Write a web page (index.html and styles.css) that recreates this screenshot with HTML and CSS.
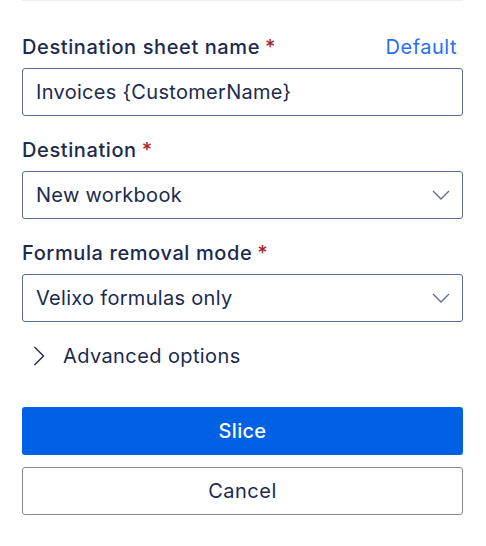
FILE: index.html
```html
<!DOCTYPE html>
<html>
<head>
<meta charset="utf-8">
<link rel="stylesheet" href="styles.css">
</head>
<body>
<div class="panel">
  <div class="field first">
    <div class="label-row">
      <label class="label">Destination sheet name<span class="req">*</span></label>
      <a class="link">Default</a>
    </div>
    <div class="control">Invoices {CustomerName}</div>
  </div>
  <div class="field">
    <div class="label-row">
      <label class="label">Destination<span class="req">*</span></label>
    </div>
    <div class="control select">
      <span>New workbook</span>
      <svg class="chev" width="18" height="10" viewBox="0 0 18 10"><path d="M1 1 L9 9 L17 1" fill="none" stroke="#5a6b95" stroke-width="1.3"/></svg>
    </div>
  </div>
  <div class="field">
    <div class="label-row">
      <label class="label">Formula removal mode<span class="req">*</span></label>
    </div>
    <div class="control select">
      <span>Velixo formulas only</span>
      <svg class="chev" width="18" height="10" viewBox="0 0 18 10"><path d="M1 1 L9 9 L17 1" fill="none" stroke="#5a6b95" stroke-width="1.3"/></svg>
    </div>
  </div>
  <div class="advanced">
    <svg class="chev-right" width="12" height="20" viewBox="0 0 12 20"><path d="M1.5 1 L10.5 10 L1.5 19" fill="none" stroke="#1b2a4e" stroke-width="1.4"/></svg>
    <span>Advanced options</span>
  </div>
  <div class="buttons">
    <button class="btn primary">Slice</button>
    <button class="btn secondary">Cancel</button>
  </div>
</div>
</body>
</html>
```
FILE: styles.css
```css
html, body {
  margin: 0;
  padding: 0;
  background: #ffffff;
}
body {
  font-family: Inter, "Liberation Sans", sans-serif;
  color: #1b2a4e;
}
.panel {
  margin: 0 23px 0 22px;
  border-top: 1px solid #eeeeee;
  display: flex;
  flex-direction: column;
}
.field {
  display: flex;
  flex-direction: column;
  gap: 9px;
  margin-top: 22px;
}
.field.first {
  margin-top: 34px;
}
.label-row {
  display: flex;
  justify-content: space-between;
  align-items: center;
  height: 24px;
  padding-right: 6px;
}
.label {
  font-size: 20px;
  font-weight: 500;
  letter-spacing: 0.6px;
  line-height: 24px;
}
.req {
  color: #a8262b;
  margin-left: 5px;
}
.link {
  font-size: 20px;
  letter-spacing: 0.5px;
  color: #2a6ef0;
  line-height: 24px;
}
.control {
  box-sizing: border-box;
  height: 48px;
  border: 1px solid #5a6b95;
  border-radius: 3px;
  padding: 0 12px 0 13px;
  font-size: 20px;
  letter-spacing: 0.3px;
  display: flex;
  align-items: center;
  justify-content: space-between;
}
.advanced {
  display: flex;
  align-items: center;
  gap: 18px;
  height: 30px;
  margin-top: 19px;
  padding-left: 11px;
  font-size: 20px;
  letter-spacing: 0.4px;
  font-weight: 400;
}
.buttons {
  display: flex;
  flex-direction: column;
  gap: 12px;
  margin-top: 36px;
}
.btn {
  box-sizing: border-box;
  height: 48px;
  border-radius: 3px;
  font-family: Inter, "Liberation Sans", sans-serif;
  font-size: 20px;
  letter-spacing: 0.3px;
  cursor: pointer;
}
.primary {
  background: #0061e4;
  color: #ffffff;
  border: none;
  font-weight: 500;
}
.secondary {
  background: #ffffff;
  color: #1b2a4e;
  border: 1px solid #8a8a8a;
  font-weight: 400;
  letter-spacing: 0.5px;
}
```
